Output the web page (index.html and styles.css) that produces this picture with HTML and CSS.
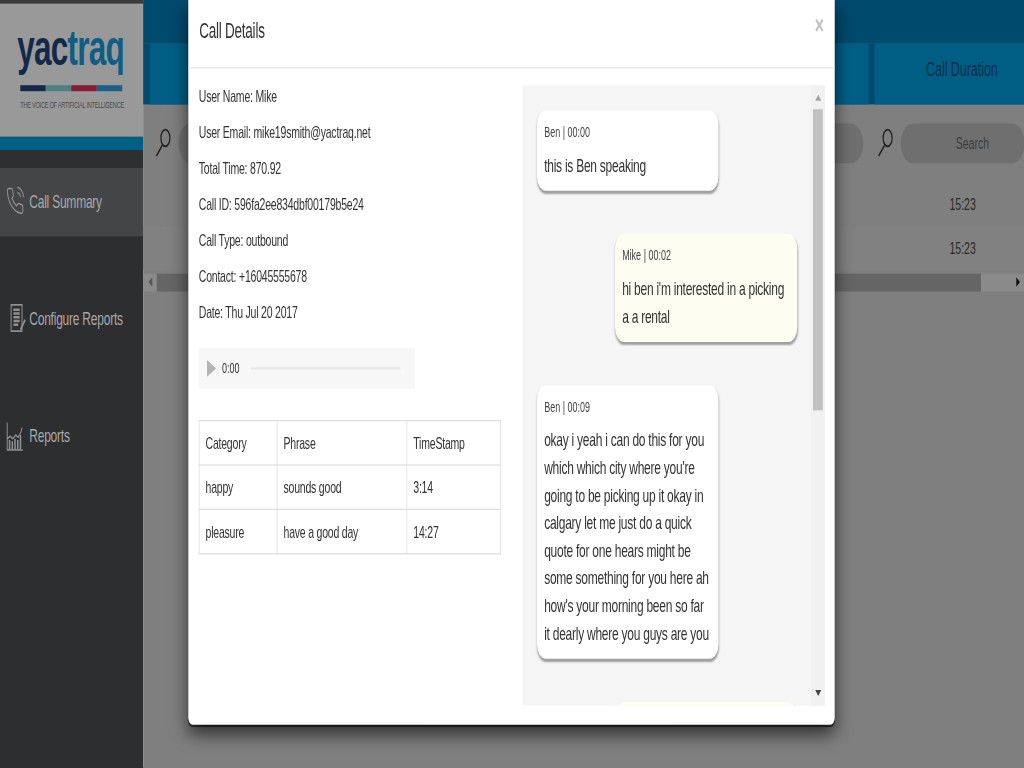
FILE: index.html
```html
<!DOCTYPE html>
<html lang="en">
<head>
<meta charset="utf-8">
<title>Call Details</title>
<link rel="stylesheet" href="styles.css">
</head>
<body>
<div class="stage">
  <aside class="sidebar">
    <div class="brand">
      <div class="wordmark"><span class="yac">yac</span><span class="traq">traq</span></div>
      <div class="rule"><i class="r1"></i><i class="r2"></i><i class="r3"></i><i class="r4"></i></div>
      <div class="tagline">THE VOICE OF ARTIFICIAL INTELLIGENCE</div>
    </div>
    <div class="brand-bar"></div>
    <div class="brand-gap"></div>
    <nav class="nav">
      <a class="nav-item active">
        <svg class="nav-icon" viewBox="0 0 24 24"><path d="M15.05 5A5 5 0 0 1 19 8.95M15.05 1A9 9 0 0 1 23 8.94m-1 7.98v3a2 2 0 0 1-2.18 2 19.79 19.79 0 0 1-8.63-3.07 19.5 19.5 0 0 1-6-6 19.79 19.79 0 0 1-3.07-8.67A2 2 0 0 1 4.11 2h3a2 2 0 0 1 2 1.72 12.84 12.84 0 0 0 .7 2.81 2 2 0 0 1-.45 2.11L8.09 9.91a16 16 0 0 0 6 6l1.27-1.27a2 2 0 0 1 2.11-.45 12.84 12.84 0 0 0 2.81.7A2 2 0 0 1 22 16.92z"/></svg>
        <span>Call Summary</span>
      </a>
      <a class="nav-item">
        <svg class="nav-icon" viewBox="0 0 24 24"><path d="M7 1h14v21H7z"/><path class="thick" d="M10 5h8M10 8h8M10 11h8M10 14h8M10 17h6M19 21l6-8"/></svg>
        <span>Configure Reports</span>
      </a>
      <a class="nav-item">
        <svg class="nav-icon" viewBox="0 0 24 24"><path d="M2 1v22h20M2 14l4-2 3 2 4-3 3 2 4-5 1-3"/><path class="thick" d="M5 15v8M8.500 16v7M12 14v9M15.500 15v8M19 11v12"/></svg>
        <span>Reports</span>
      </a>
    </nav>
  </aside>

  <main class="main">
    <div class="top-strip"></div>
    <div class="tabs">
      <div class="tab tab-wide"></div>
      <div class="tab tab-last">Call Duration</div>
    </div>
    <div class="search-row">
      <svg class="search-icon" viewBox="0 0 24 24"><ellipse cx="15" cy="8" rx="6" ry="7"/><path d="M11 14L3 23"/></svg>
      <div class="pill pill-wide"></div>
      <svg class="search-icon" viewBox="0 0 24 24"><ellipse cx="15" cy="8" rx="6" ry="7"/><path d="M11 14L3 23"/></svg>
      <div class="pill pill-last">Search</div>
    </div>
    <div class="data-row"><span>15:23</span></div>
    <div class="data-row alt"><span>15:23</span></div>
    <div class="hscroll">
      <span class="hbtn"><i class="arrow-left"></i></span>
      <span class="hthumb"></span>
      <span class="hbtn end"><i class="arrow-right"></i></span>
    </div>
  </main>

  <section class="modal">
    <header class="modal-header">
      <h4 class="modal-title">Call Details</h4>
      <span class="close">×</span>
    </header>
    <div class="modal-body">
      <div class="details">
        <p>User Name: Mike</p>
        <p>User Email: mike19smith@yactraq.net</p>
        <p>Total Time: 870.92</p>
        <p>Call ID: 596fa2ee834dbf00179b5e24</p>
        <p>Call Type: outbound</p>
        <p>Contact: +16045555678</p>
        <p>Date: Thu Jul 20 2017</p>
        <div class="audio">
          <i class="play"></i>
          <span class="audio-time">0:00</span>
          <span class="audio-track"></span>
        </div>
        <table class="phrases">
          <colgroup><col class="c1"><col class="c2"><col class="c3"></colgroup>
          <tr><td>Category</td><td>Phrase</td><td>TimeStamp</td></tr>
          <tr><td>happy</td><td>sounds good</td><td>3:14</td></tr>
          <tr><td>pleasure</td><td>have a good day</td><td>14:27</td></tr>
        </table>
      </div>
      <div class="chat">
        <div class="chat-scroll">
          <article class="bubble">
            <div class="meta">Ben | 00:00</div>
            <div class="msg">this is Ben speaking</div>
          </article>
          <article class="bubble me">
            <div class="meta">Mike | 00:02</div>
            <div class="msg">hi ben i'm interested in a picking a a rental</div>
          </article>
          <article class="bubble">
            <div class="meta">Ben | 00:09</div>
            <div class="msg">okay i yeah i can do this for you which which city where you're going to be picking up it okay in calgary let me just do a quick quote for one hears might be some something for you here ah how's your morning been so far it dearly where you guys are you</div>
          </article>
          <article class="bubble me stub"></article>
        </div>
        <div class="vscroll">
          <i class="arrow-up"></i>
          <span class="vthumb"></span>
          <i class="arrow-down"></i>
        </div>
      </div>
    </div>
  </section>
</div>
</body>
</html>
```
FILE: styles.css
```css
* { box-sizing: border-box; }
html, body { margin: 0; height: 100%; overflow: hidden; background: #7f7f7f; }
body { font-family: "Liberation Sans", Arial, sans-serif; font-size: 14px; line-height: 20px; color: #333; }

.stage {
  position: relative;
  display: flex;
  width: 1366px;
  height: 640px;
  transform: scale(0.75, 1.2);
  transform-origin: 0 0;
}

/* sidebar */
.sidebar { width: 191px; flex: none; background: #2d2e30; display: flex; flex-direction: column; }
.brand { height: 113.500px; background: #999; border-top: 3px solid #3a3a3a; padding: 16px 0 0 23px; }
.wordmark { font-size: 42px; line-height: 42px; font-weight: 700; letter-spacing: -1px; }
.yac { color: #13294a; }
.traq { color: #0e5d85; }
.rule { display: flex; width: 136px; height: 5px; margin: 10px 0 0 4px; }
.rule i { flex: 1; }
.r1 { background: #14294a; }
.r2 { background: #4e8081; }
.r3 { background: #8c1a33; }
.r4 { background: #1c5f8b; }
.tagline { font-size: 7.5px; line-height: 10px; margin: 7px 0 0 4px; color: #4a4a4a; white-space: nowrap; letter-spacing: -.35px; }
.brand-bar { height: 11px; background: #005f85; }
.brand-gap { height: 15.500px; background: #2e2f31; }
.nav { display: flex; flex-direction: column; gap: 40.500px; }
.nav-item { display: flex; align-items: center; height: 57px; padding: 0 0 1px 7px; font-size: 16px; letter-spacing: -.3px; color: #a8a8a8; }
.nav-item.active { background: #434547; padding-bottom: 2px; }
.nav-icon { width: 26px; height: 25px; margin-right: 6px; flex: none; fill: none; stroke: #8f8f8f; stroke-width: 1.3; overflow: visible; }
.nav-icon .thick { stroke-width: 2; }

/* page under the modal */
.main { flex: 1; min-width: 0; background: #7f7f7f; }
.top-strip { height: 36px; background: #004a6e; }
.tabs { display: flex; gap: 8px; height: 51px; padding-left: 9px; background: #004a6e; }
.tab { background: #005e85; display: flex; align-items: center; justify-content: center; font-size: 16.500px; color: #002d4d; }
.tab-wide { flex: 1; }
.tab-last { width: 200px; padding: 0 0 10px 33px; }
.search-row { display: flex; align-items: center; height: 32.500px; margin-top: 16px; padding-left: 14px; }
.search-icon { width: 25px; height: 24px; flex: none; fill: none; stroke: #1f1f1f; stroke-width: 1.6; }
.pill { height: 32.500px; background: #6f6f6f; border-radius: 17px; }
.pill-wide { width: 913px; margin: 0 17px 0 8px; }
.pill-last { flex: 1; margin-left: 8px; display: flex; align-items: center; justify-content: center; font-size: 14px; color: #3c3c3c; padding: 0 0 0 26px; }
.data-row { height: 36.500px; display: flex; align-items: center; justify-content: flex-end; padding-right: 65px; margin-top: 16.500px; color: #2a2a2a; }
.data-row.alt { margin-top: 0; background: #818181; }
.hscroll { display: flex; height: 15.500px; background: #8a8a8a; margin-top: 2.500px; }
.hbtn { width: 18px; display: flex; align-items: center; justify-content: center; flex: none; }
.hbtn.end { margin-left: auto; width: 58px; justify-content: flex-end; padding-right: 6px; }
.hthumb { width: 1099px; background: #656565; }
.arrow-left { border: 4px solid transparent; border-left: 0; border-right: 5px solid #555; }
.arrow-right { border: 4px solid transparent; border-right: 0; border-left: 5px solid #111; }

/* modal */
.modal {
  position: absolute;
  left: 250.500px;
  top: 0;
  width: 862px;
  height: 604px;
  background: #fff;
  border-radius: 0 0 6px 6px;
  box-shadow: 0 1px 1px rgba(0, 0, 0, .6), 0 8px 18px rgba(0, 0, 0, .6);
  display: flex;
  flex-direction: column;
}
.modal-header { position: relative; flex: none; height: 56.500px; padding: 13px 15px; border-bottom: 1px solid #e5e5e5; }
.modal-title { margin: 0; font-size: 18px; line-height: 26px; font-weight: 400; letter-spacing: -.3px; }
.close { position: absolute; right: 14px; top: 10px; font-size: 21px; line-height: 21px; color: #c2c2c2; font-weight: 700; }
.modal-body { flex: 1; min-height: 0; display: flex; gap: 30px; padding: 14px 12px 16px 14.500px; }
.details { width: 402px; flex: none; margin-top: -1px; letter-spacing: -.27px; }
.details p { margin: 0 0 10px; }
.audio { display: flex; align-items: center; width: 288px; height: 33.500px; margin-top: 20.500px; padding-left: 11px; background: #f7f7f7; letter-spacing: 0; }
.play { border: 7px solid transparent; border-right: 0; border-left: 12px solid #b4b4b4; }
.audio-time { font-size: 12px; margin-left: 8px; }
.audio-track { width: 199px; height: 2px; margin-left: 16px; background: #e8e8e8; }
.phrases { width: 402px; margin-top: 26.500px; border-collapse: collapse; table-layout: fixed; }
.phrases td { padding: 7px 8px 8px; height: 37px; border: 1px solid #ddd; }
.c1 { width: 104px; }
.c2 { width: 173px; }
.c3 { width: 125px; }

.chat { width: 403px; flex: none; display: flex; background: #f5f5f5; min-height: 0; }
.chat-scroll { flex: 1; min-width: 0; overflow: hidden; padding: 21px 18px 0 19px; display: flex; flex-direction: column; gap: 36px; }
.bubble { flex: none; width: 242px; padding: 10px 10px 10px 9.500px; border-radius: 12px; background: #fff; box-shadow: 0 2px 2px rgba(0, 0, 0, .35); }
.bubble.me { align-self: flex-end; width: 243px; background: #fdfdf2; }
.bubble.stub { height: 60px; }
.meta { font-size: 12px; line-height: 17px; margin-bottom: 7px; color: #444; }
.msg { font-size: 16px; line-height: 23px; color: #333; letter-spacing: -.33px; }
.vscroll { width: 19px; flex: none; background: #f1f1f1; display: flex; flex-direction: column; align-items: center; padding: 8px 0 8px; }
.vthumb { width: 13px; height: 251px; margin-top: 7px; background: #c1c1c1; }
.arrow-up { border: 4px solid transparent; border-top: 0; border-bottom: 5px solid #a3a3a3; }
.arrow-down { margin-top: auto; border: 4px solid transparent; border-bottom: 0; border-top: 5px solid #444; }
```
